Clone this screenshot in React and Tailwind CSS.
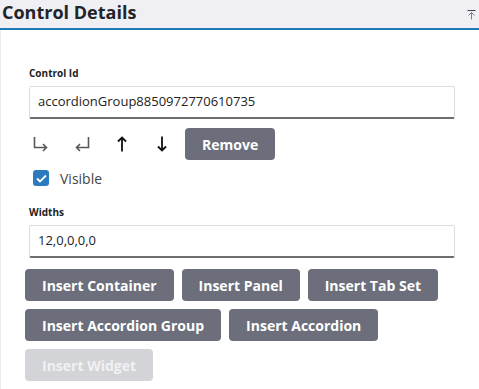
import React from 'react';

const font = { fontFamily: '"Open Sans", "Noto Sans", sans-serif' };

function Btn({ children, disabled }) {
  return (
    <button
      className={
        disabled
          ? 'h-8 px-[17px] rounded-[4px] bg-[#d3d4d8] text-[#f1f1f3] text-[14px] font-bold'
          : 'h-8 px-[17px] rounded-[4px] bg-[#6c6f7b] text-white text-[14px] font-bold'
      }
    >
      {children}
    </button>
  );
}

{/* Properties panel for the selected control */}
export default function App() {
  return (
    <div className="w-[479px] h-[389px] bg-white overflow-hidden" style={font}>
      {/* header */}
      <div className="h-[28px] bg-[#f0f0f4] flex items-start justify-between pl-[2px] pr-[3px] pt-[1px]">
        <h1 className="text-[18px] font-bold text-[#212529] leading-[18px] py-[2px]">Control Details</h1>
        <svg width="9" height="10" viewBox="0 0 9 10" className="mt-[9px]">
          <path d="M0.5 0.5h8" stroke="#444" strokeWidth="1" />
          <path d="M4.5 2.5v7M1.5 5.5l3-3 3 3" stroke="#7a7f9a" strokeWidth="1" fill="none" />
        </svg>
      </div>
      <div className="h-[2px] bg-[#1f7ab8]" />

      <div className="h-[359px] border-l border-[#e9e9ee] pl-[24px] pr-[20px] pt-[37px]">
        {/* control id */}
        <div className="px-1">
          <label className="block text-[10px] font-bold text-[#222] leading-[13px]">Control Id</label>
          <div className="mt-[6px] h-[33px] border border-[#dcdcdc] border-b-2 border-b-[#6e6e6e] rounded-[2px] flex items-center pl-[8px] text-[13px] text-[#222]">
            accordionGroup8850972770610735
          </div>
        </div>

        {/* move controls */}
        <div className="flex items-center mt-[9px] h-8">
          <div className="w-[160px] flex items-center">
            <svg width="16" height="15" viewBox="0 0 16 15" className="ml-[8px]">
              <path d="M1.5 0v10.5h12M10 7l3.5 3.5L10 14" stroke="#585858" strokeWidth="1.6" fill="none" />
            </svg>
            <svg width="16" height="15" viewBox="0 0 16 15" className="ml-[25px]">
              <path d="M14.5 0v10.5h-12M6 7l-3.5 3.5L6 14" stroke="#585858" strokeWidth="1.6" fill="none" />
            </svg>
            <svg width="10" height="16" viewBox="0 0 10 16" className="ml-[27px]">
              <path d="M5 1.5v14M1 5.5l4-4 4 4" stroke="#111" strokeWidth="1.8" fill="none" />
            </svg>
            <svg width="10" height="16" viewBox="0 0 10 16" className="ml-[30px]">
              <path d="M5 0.5v14M1 10.5l4 4 4-4" stroke="#111" strokeWidth="1.8" fill="none" />
            </svg>
          </div>
          <Btn>Remove</Btn>
        </div>

        {/* visible */}
        <div className="flex items-center mt-[10px] ml-[8px] h-4">
          <span className="w-[16px] h-[16px] rounded-[3px] bg-[#2b7bbf] flex items-center justify-center">
            <svg width="11" height="9" viewBox="0 0 11 9">
              <path d="M1 4.5l3 3L10 1.5" stroke="white" strokeWidth="1.8" fill="none" />
            </svg>
          </span>
          <span className="ml-[11px] text-[14px] text-[#444]">Visible</span>
        </div>

        {/* widths */}
        <div className="px-1 mt-[20px]">
          <label className="block text-[10px] font-bold text-[#222] leading-[13px]">Widths</label>
          <div className="mt-[6px] h-[33px] border border-[#dcdcdc] border-b-2 border-b-[#6e6e6e] rounded-[2px] flex items-center pl-[8px] text-[13px] text-[#222]">
            12,0,0,0,0
          </div>
        </div>

        {/* insert buttons */}
        <div className="flex flex-wrap gap-2 mt-[11px] w-[420px]">
          <Btn>Insert Container</Btn>
          <Btn>Insert Panel</Btn>
          <Btn>Insert Tab Set</Btn>
          <Btn>Insert Accordion Group</Btn>
          <Btn>Insert Accordion</Btn>
          <Btn disabled>Insert Widget</Btn>
        </div>
      </div>
    </div>
  );
}
